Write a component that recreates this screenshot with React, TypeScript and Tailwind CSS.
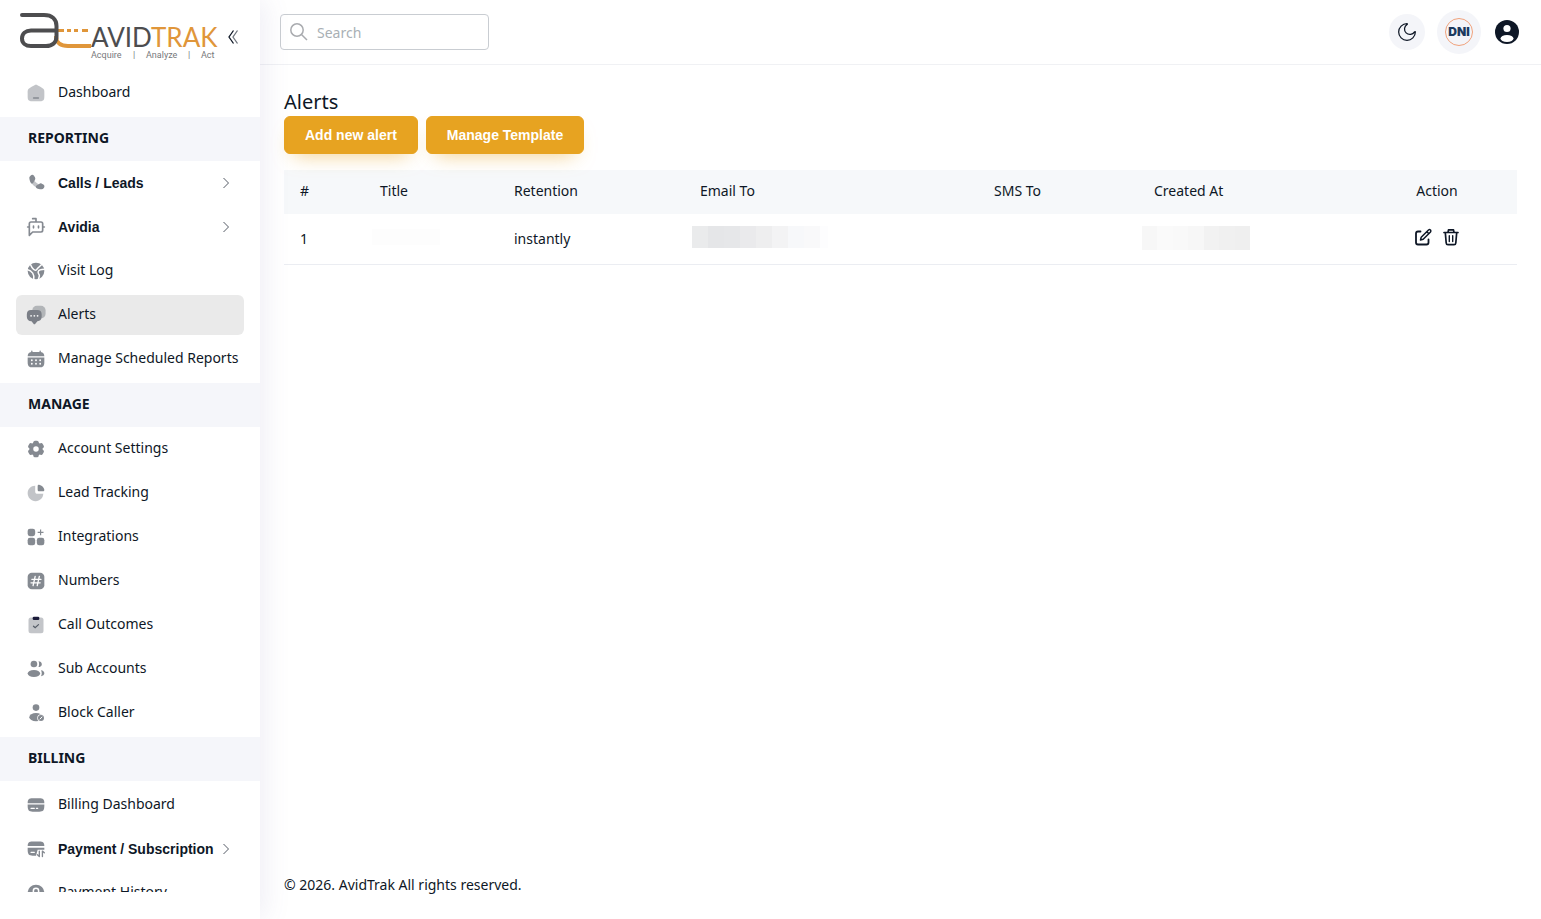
import type { ReactNode } from "react";

interface NavItem {
  label: string;
  icon: ReactNode;
  active?: boolean;
  expandable?: boolean;
}

interface NavSection {
  title?: string;
  items: NavItem[];
}

function NavIcon({ children }: { children: ReactNode }) {
  return (
    <svg viewBox="0 0 24 24" fill="currentColor" className="size-5 shrink-0 opacity-50" aria-hidden="true">
      {children}
    </svg>
  );
}

const homeIcon = (
  <NavIcon>
    <path
      opacity="0.5"
      d="M2 12.2039C2 9.91549 2 8.77128 2.5192 7.82274C3.0384 6.87421 3.98695 6.28551 5.88403 5.10813L7.88403 3.86687C9.88939 2.62229 10.8921 2 12 2C13.1079 2 14.1106 2.62229 16.116 3.86687L18.116 5.10812C20.0131 6.28551 20.9616 6.87421 21.4808 7.82274C22 8.77128 22 9.91549 22 12.2039V13.725C22 17.6258 22 19.5763 20.8284 20.7881C19.6569 22 17.7712 22 14 22H10C6.22876 22 4.34315 22 3.17157 20.7881C2 19.5763 2 17.6258 2 13.725V12.2039Z"
    />
    <rect x="8.25" y="17.2" width="7.5" height="1.6" rx="0.8" />
  </NavIcon>
);

const phoneIcon = (
  <NavIcon>
    <path
      opacity="0.5"
      d="M10 7.5C10 9 10.6 10 12.1 11.500C13.600 13 15 13.800 16.500 13L15 18.300C12.800 17.700 10.800 16.600 8.800 14.700C6.900 12.800 5.700 11 5 9Z"
    />
    <path d="M4 5.75C3.97 4.6 4.6 3.9 5.4 3.2C6.8 1.8 8.600 1.900 9.600 3.300L10.700 5C11.500 6.500 11.200 7.600 10.400 8.600C9.500 9.700 9.300 10.800 8.800 11.800C8 13.200 6.500 12.900 5.700 11.600C4.700 9.700 4.050 7.500 4 5.750Z" />
    <path d="M18.680 19.500C19.800 19.300 20.600 18.800 21.400 17.900C22.600 16.400 22.300 14.700 20.880 13.830L18.970 12.790C17.700 12.100 16.700 12.500 15.900 13.200C14.900 14 13.900 14.100 13 14.600C11.500 15.400 11.500 17.300 12.900 18.200C14.700 19.300 17 19.600 18.680 19.500Z" />
  </NavIcon>
);

const botIcon = (
  <NavIcon>
    <path
      fill="none"
      stroke="currentColor"
      strokeWidth="2"
      strokeLinecap="round"
      strokeLinejoin="round"
      d="M12 6V2H8M8 18l-4 4V8a2 2 0 0 1 2-2h12a2 2 0 0 1 2 2v8a2 2 0 0 1-2 2ZM2 12h2M9 11v2M15 11v2M20 12h2"
    />
  </NavIcon>
);

const globeIcon = (
  <NavIcon>
    <circle cx="12" cy="12" r="10" />
    <path
      fill="none"
      stroke="white"
      strokeWidth="1.800"
      strokeLinecap="round"
      strokeLinejoin="round"
      d="M5.500 4.500C6.500 7 7.500 8.500 9 10C10.500 11.500 12 11.500 13 10C14.200 8.200 15.500 7.500 18.500 4.500M2 10.500C4.500 11 6.500 12.500 8 14.500C9.500 16.700 9.700 19 9.300 22M22 10C18.500 10 15.500 10.500 14.700 12.500C14 14.500 15.500 15.500 16 17C16.300 18.500 15.500 20 15 21.500"
    />
  </NavIcon>
);

const chatIcon = (
  <NavIcon>
    <rect opacity="0.5" x="7.500" y="1" width="16" height="15" rx="5.500" />
    <path d="M6 6H13.500C17 6 18.800 7.800 18.800 11V14C18.800 17.200 17 19.200 13.700 19.400L11.200 22.400C10.600 23.200 9.600 23.200 9 22.400L6.600 19.400C3 19.200 1 17.400 1 14V11C1 7.800 2.800 6 6 6Z" />
    <g fill="white">
      <circle cx="6.100" cy="13" r="1.100" />
      <circle cx="10" cy="13" r="1.100" />
      <circle cx="13.900" cy="13" r="1.100" />
    </g>
  </NavIcon>
);

const calendarIcon = (
  <NavIcon>
    <path d="M7 1.700C7.500 1.700 7.800 2 7.800 2.500V3.600C10 3.500 14 3.500 16.200 3.600V2.500C16.200 2 16.500 1.700 17 1.700S17.800 2 17.800 2.500V3.700C20.500 4 21.800 5.500 22 8.600H2C2.200 5.500 3.500 4 6.200 3.700V2.500C6.200 2 6.500 1.700 7 1.700Z" />
    <path d="M2 10.100H22V15.500C22 20.500 20.500 22 16 22H8C3.500 22 2 20.500 2 15.500Z" />
    <g fill="white">
      <circle cx="7" cy="13.500" r="1.100" />
      <circle cx="12" cy="13.500" r="1.100" />
      <circle cx="17" cy="13.500" r="1.100" />
      <circle cx="7" cy="17.700" r="1.100" />
      <circle cx="12" cy="17.700" r="1.100" />
      <circle cx="17" cy="17.700" r="1.100" />
    </g>
  </NavIcon>
);

const gearIcon = (
  <NavIcon>
    <circle cx="12" cy="12" r="8" />
    <rect x="8.800" y="2" width="6.400" height="20" rx="2" />
    <rect x="8.800" y="2" width="6.400" height="20" rx="2" transform="rotate(60 12 12)" />
    <rect x="8.800" y="2" width="6.400" height="20" rx="2" transform="rotate(120 12 12)" />
    <circle cx="12" cy="12" r="3.300" fill="white" />
  </NavIcon>
);

const pieIcon = (
  <NavIcon>
    <path opacity="0.5" d="M11 3.300C5.800 3.300 2 7.300 2 12.300C2 17.600 6.200 21.800 11.500 21.800C16.700 21.800 20.600 18 20.700 13H13.500C12 13 11 12 11 10.500Z" />
    <path d="M14 3.500C14 2.500 14.800 1.800 15.800 2C19 2.600 21.400 5 22 8.200C22.200 9.200 21.500 10 20.500 10H16C14.700 10 14 9.300 14 8Z" />
  </NavIcon>
);

const widgetsIcon = (
  <NavIcon>
    <rect x="2" y="2" width="9" height="9" rx="2.800" />
    <rect x="2" y="13" width="9" height="9" rx="2.800" />
    <rect x="13" y="13" width="9" height="9" rx="2.800" />
    <path d="M16.800 3H18.200V5.800H21V7.200H18.200V10H16.800V7.200H14V5.800H16.800Z" />
  </NavIcon>
);

const hashIcon = (
  <NavIcon>
    <rect x="2" y="2" width="20" height="20" rx="5" />
    <path
      fill="none"
      stroke="white"
      strokeWidth="1.600"
      strokeLinecap="round"
      d="M11 6.500L8.500 17.500M16 6.500L13.500 17.500M7 10H18M6 14.200H17"
    />
  </NavIcon>
);

// the clip stays fully dark while the board itself is faded
const clipboardIcon = (
  <svg viewBox="0 0 24 24" fill="currentColor" className="size-5 shrink-0" aria-hidden="true">
    <rect opacity="0.25" x="3" y="3" width="18" height="19" rx="3" />
    <path opacity="0.6" fill="none" stroke="currentColor" strokeWidth="1.500" strokeLinecap="round" d="M9 13.500L11 15.300L15 11.500" />
    <rect x="8" y="2" width="8" height="4" rx="1.500" fill="#1b1b3a" />
  </svg>
);

const usersIcon = (
  <NavIcon>
    <circle cx="9.500" cy="6" r="4" />
    <ellipse cx="9.500" cy="17.500" rx="7.500" ry="4.200" />
    <path d="M15 2.700C17.200 2.700 19 4.200 19 6.200S17.200 9.600 15 9.600C16 7.500 16 4.700 15 2.700Z" />
    <path d="M18 13.500C20.400 13.800 22 15.300 22 17.200S20.400 20.400 18 20.700C19.200 18.500 19.200 15.500 18 13.500Z" />
  </NavIcon>
);

const blockUserIcon = (
  <NavIcon>
    <circle cx="12" cy="5.500" r="4" />
    <ellipse cx="12" cy="17" rx="8" ry="5" />
    <circle cx="18" cy="18" r="4.500" fill="white" />
    <circle cx="18" cy="18" r="3.600" />
    <path fill="none" stroke="white" strokeWidth="1.200" d="M16.500 19.500L19.500 16.500" />
  </NavIcon>
);

const cardIcon = (
  <NavIcon>
    <path d="M2 9.800C2 5.500 3.500 4 8 4H16C20.500 4 22 5.500 22 9.800Z" />
    <path d="M2 11.300H22V13C22 18.500 20.500 20 16 20H8C3.500 20 2 18.500 2 13Z" />
    <path fill="none" stroke="white" strokeWidth="1.500" strokeLinecap="round" d="M6 16H10M12.500 16H14" />
  </NavIcon>
);

const cardTransferIcon = (
  <NavIcon>
    <path d="M2 8.500C2 4.500 3.500 3 8 3H16C20.500 3 22 4.500 22 8.500Z" />
    <path d="M2 10.500H22V13H14L12 20H8C3.500 20 2 18.500 2 13Z" />
    <path fill="none" stroke="white" strokeWidth="1.500" strokeLinecap="round" d="M6 16H10" />
    <path
      fill="none"
      stroke="currentColor"
      strokeWidth="1.600"
      strokeLinecap="round"
      strokeLinejoin="round"
      d="M16 14.500V21L13.700 18.900M19.700 21V14.500L22 16.600"
    />
  </NavIcon>
);

const historyIcon = (
  <NavIcon>
    <circle cx="12" cy="12" r="10" />
    <circle cx="12" cy="9.500" r="3.200" fill="none" stroke="white" strokeWidth="1.800" />
  </NavIcon>
);

const sections: NavSection[] = [
  { items: [{ label: "Dashboard", icon: homeIcon }] },
  {
    title: "Reporting",
    items: [
      { label: "Calls / Leads", icon: phoneIcon, expandable: true },
      { label: "Avidia", icon: botIcon, expandable: true },
      { label: "Visit Log", icon: globeIcon },
      { label: "Alerts", icon: chatIcon, active: true },
      { label: "Manage Scheduled Reports", icon: calendarIcon },
    ],
  },
  {
    title: "Manage",
    items: [
      { label: "Account Settings", icon: gearIcon },
      { label: "Lead Tracking", icon: pieIcon },
      { label: "Integrations", icon: widgetsIcon },
      { label: "Numbers", icon: hashIcon },
      { label: "Call Outcomes", icon: clipboardIcon },
      { label: "Sub Accounts", icon: usersIcon },
      { label: "Block Caller", icon: blockUserIcon },
    ],
  },
  {
    title: "Billing",
    items: [
      { label: "Billing Dashboard", icon: cardIcon },
      { label: "Payment / Subscription", icon: cardTransferIcon, expandable: true },
      { label: "Payment History", icon: historyIcon },
    ],
  },
];

function Logo() {
  return (
    <svg viewBox="0 0 200 56" className="h-14 w-[200px]" role="img" aria-label="AvidTrak">
      <g fill="none" strokeWidth="4">
        <path stroke="#e0963a" d="M36 28C36 35 41 38 48 38H71" />
        <path stroke="#e0963a" strokeWidth="3.200" d="M38 22.500H44M47 22.500H51M54 22.500H58M62 22.500H68" />
        <path
          stroke="#4d4d4f"
          strokeLinecap="round"
          d="M2 7H24C32 7 36.500 11 36.500 18V28C36.500 34.500 32.500 38 26 38H11C5.500 38 2 35 2 30.500S5.500 22.500 11 22.500H36"
        />
      </g>
      <text x="71" y="39" fontSize="26" className="font-[Lato] font-normal" fill="#4d4d4f">
        AVID<tspan fill="#e0963a">TRAK</tspan>
      </text>
      <g fontSize="9" fill="#77787b" className="font-[Roboto]">
        <text x="71" y="50">Acquire</text>
        <text x="113" y="50">|</text>
        <text x="126" y="50">Analyze</text>
        <text x="168" y="50">|</text>
        <text x="181" y="50">Act</text>
      </g>
    </svg>
  );
}

function NavRow({ item }: { item: NavItem }) {
  if (item.expandable) {
    return (
      <button
        type="button"
        className="flex h-10 w-full items-center rounded-md px-2.5 text-left font-['Liberation_Sans',Arial,sans-serif] text-sm font-bold whitespace-nowrap"
      >
        {item.icon}
        <span className="ml-3 flex-1">{item.label}</span>
        <svg viewBox="0 0 16 16" className="size-4 shrink-0 opacity-70" fill="none" stroke="currentColor" aria-hidden="true">
          <path d="M5.500 3L10.500 8L5.500 13" />
        </svg>
      </button>
    );
  }

  return (
    <a
      href="#"
      aria-current={item.active ? "page" : undefined}
      className={
        item.active
          ? "flex h-10 items-center gap-3 rounded-md bg-[#eaeaea] px-2.5 text-sm whitespace-nowrap"
          : "flex h-10 items-center gap-3 rounded-md px-2.5 text-sm whitespace-nowrap"
      }
    >
      {item.icon}
      <span className="pb-0.5">{item.label}</span>
    </a>
  );
}

function Sidebar() {
  return (
    <aside className="sticky top-0 z-10 flex h-screen w-[260px] shrink-0 flex-col bg-white pb-[27px] shadow-[5px_0_25px_0_rgba(94,92,154,0.1)]">
      <div className="flex h-[71px] shrink-0 items-start pt-2 pl-5">
        <a href="#">
          <Logo />
        </a>
        <button type="button" aria-label="Collapse menu" className="mt-5 ml-1.5">
          <svg viewBox="0 0 16 16" className="size-4" fill="none" stroke="currentColor">
            <path strokeWidth="1.300" d="M7.500 2.500L3 9L7.500 15.500" />
            <path strokeWidth="1.300" opacity="0.6" d="M11.500 2.500L7 9L11.500 15.500" />
          </svg>
        </button>
      </div>
      <nav className="min-h-0 flex-1 overflow-hidden">
        {sections.map((section) => (
          <section key={section.items[0].label}>
            {section.title && (
              <h2 className="flex h-11 items-center bg-[#f5f6fa] px-7 pb-0.5 text-sm font-bold uppercase">
                {section.title}
              </h2>
            )}
            <ul className="flex flex-col gap-1 px-4 pt-0.5 pb-1 last:in-[section:last-child]:pt-1">
              {section.items.map((item) => (
                <li key={item.label}>
                  <NavRow item={item} />
                </li>
              ))}
            </ul>
          </section>
        ))}
      </nav>
    </aside>
  );
}

function Topbar() {
  return (
    <header className="flex h-[65px] items-center justify-between border-b border-[#f0f1f4] pr-[22px] pl-5">
      <div className="flex h-9 w-[209px] items-center gap-2 rounded border border-[#c9cdd2] px-2">
        <svg viewBox="0 0 20 20" className="size-5 shrink-0 text-[#a9abaf]" fill="none" stroke="currentColor" strokeWidth="1.500">
          <circle cx="8" cy="8" r="6.200" />
          <path d="M12.500 12.500L18 18" />
        </svg>
        <input
          type="search"
          aria-label="Search"
          placeholder="Search"
          className="h-full w-full min-w-0 text-sm outline-none placeholder:text-[#a9b0b5]"
        />
      </div>
      <div className="flex items-center">
        <button
          type="button"
          aria-label="Dark mode"
          className="mr-3 flex size-9 items-center justify-center rounded-full bg-[#f4f5f9]"
        >
          <svg viewBox="0 0 24 24" className="size-5" fill="none" stroke="currentColor" strokeWidth="1.500" strokeLinejoin="round">
            <path d="M22 12a10 10 0 1 1-10-10c.46 0 .7.540.14.930A6.500 6.500 0 1 0 21.070 11.860c.39-.54.930-.32.930.14z" />
          </svg>
        </button>
        <button type="button" className="mr-3.5 flex size-11 items-center justify-center rounded-full bg-[#f4f5f9]">
          <span className="flex size-7 items-center justify-center rounded-full border border-[#f0a27c] font-[Inter,sans-serif] text-xs font-black text-[#1c3a5e]">
            DNI
          </span>
        </button>
        <button type="button" aria-label="Profile">
          <svg viewBox="0 0 24 24" className="size-6">
            <circle cx="12" cy="12" r="12" fill="#0e1726" />
            <circle cx="12" cy="8.500" r="3.600" fill="white" />
            <ellipse cx="12" cy="18.500" rx="6.500" ry="3.500" fill="white" />
          </svg>
        </button>
      </div>
    </header>
  );
}

function AlertsTable() {
  return (
    <table className="mt-4 w-full table-fixed text-left text-sm">
      <colgroup>
        <col className="w-20" />
        <col className="w-[134px]" />
        <col className="w-[186px]" />
        <col className="w-[294px]" />
        <col className="w-40" />
        <col />
        <col className="w-40" />
      </colgroup>
      <thead>
        <tr className="h-11 bg-[#f6f8fa]">
          <th className="px-4 pb-0.5 font-normal">#</th>
          <th className="px-4 pb-0.5 font-normal">Title</th>
          <th className="px-4 pb-0.5 font-normal">Retention</th>
          <th className="px-4 pb-0.5 font-normal">Email To</th>
          <th className="px-4 pb-0.5 font-normal">SMS To</th>
          <th className="px-4 pb-0.5 font-normal">Created At</th>
          <th className="px-4 pb-0.5 text-center font-normal">Action</th>
        </tr>
      </thead>
      <tbody>
        <tr className="h-[50px] border-b border-[#ebedf2]">
          <td className="px-4">1</td>
          <td className="pb-1 pl-2">
            <div className="h-4 w-[68px] bg-[#fdfdfd]" />
          </td>
          <td className="px-4">instantly</td>
          <td className="pb-1 pl-2">
            <div className="flex h-[22px] w-[136px]">
              <span className="flex-1 bg-[#eaebec]" />
              <span className="flex-1 bg-[#e5e6e8]" />
              <span className="flex-1 bg-[#e6e7e9]" />
              <span className="flex-1 bg-[#eaeaec]" />
              <span className="flex-1 bg-[#eeeeef]" />
              <span className="flex-1 bg-[#f3f3f4]" />
              <span className="flex-1 bg-[#f7f8fa]" />
              <span className="flex-1 bg-[#f9f9fa]" />
              <span className="w-2 bg-[#fdfdfe]" />
            </div>
          </td>
          <td />
          <td className="pb-0.5 pl-1">
            <div className="flex h-6 w-[108px]">
              <span className="flex-1 bg-[#f7f7f7]" />
              <span className="flex-1 bg-[#fafafa]" />
              <span className="flex-1 bg-[#f9f9f9]" />
              <span className="flex-1 bg-[#f7f7f7]" />
              <span className="flex-1 bg-[#f2f2f2]" />
              <span className="flex-1 bg-[#f0f0f0]" />
              <span className="flex-1 bg-[#efefef]" />
            </div>
          </td>
          <td className="px-4 pb-1">
            <div className="flex justify-center gap-2">
              <button type="button" aria-label="Edit">
                <svg viewBox="0 0 20 20" className="size-5" fill="none" stroke="currentColor" strokeWidth="1.800" strokeLinejoin="round">
                  <path strokeLinecap="round" d="M7.500 4.500H5Q3 4.500 3 6.500V15.500Q3 17.500 5 17.500H13.500Q15.500 17.500 15.500 15.500V12.500" />
                  <path strokeWidth="1.500" d="M7.500 13L8.200 10.300L15.500 3Q16.500 2.200 17.500 3Q18.300 4 17.500 5L10.200 12.300ZM13.800 4.700L15.800 6.700" />
                </svg>
              </button>
              <button type="button" aria-label="Delete">
                <svg viewBox="0 0 20 20" className="size-5" fill="none" stroke="currentColor" strokeWidth="1.700" strokeLinejoin="round">
                  <path strokeLinecap="round" d="M3 5.500H17" />
                  <path d="M7 5.500L7.500 2.800H12.500L13 5.500" />
                  <path d="M4.300 5.500L5.200 16Q5.300 17.700 7 17.700H13Q14.700 17.700 14.800 16L15.700 5.500" />
                  <path strokeWidth="1.400" strokeLinecap="round" d="M8.300 8.700V14.500M11.700 8.700V14.500" />
                </svg>
              </button>
            </div>
          </td>
        </tr>
      </tbody>
    </table>
  );
}

const actionClass =
  "h-[38px] rounded-md border border-[#e7a321] bg-[#e7a321] px-5 font-['Liberation_Sans',Arial,sans-serif] text-sm font-bold text-white shadow-[0_10px_20px_-10px_rgba(231,163,33,0.6)]";

export default function App() {
  return (
    <div className="flex min-h-screen bg-white font-['Noto_Sans',sans-serif] text-[#0e1726]">
      <Sidebar />
      <div className="flex min-w-0 flex-1 flex-col">
        <Topbar />
        <main className="flex-1 px-6 pt-[23px]">
          <h1 className="text-xl leading-7">Alerts</h1>
          <div className="flex gap-2">
            <button type="button" className={actionClass}>
              Add new alert
            </button>
            <button type="button" className={actionClass}>
              Manage Template
            </button>
          </div>
          <AlertsTable />
        </main>
        <footer className="px-6 pb-6 text-sm leading-5">© 2026. AvidTrak All rights reserved.</footer>
      </div>
    </div>
  );
}
